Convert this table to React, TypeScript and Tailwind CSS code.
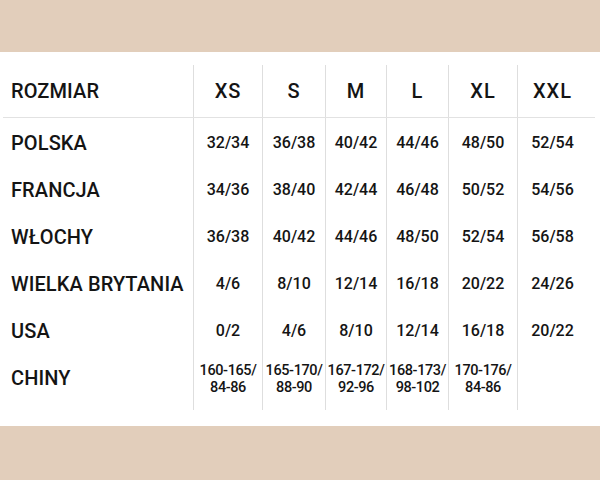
import React from "react";

const cols = ["XS", "S", "M", "L", "XL", "XXL"];
const rows: [string, string[]][] = [
  ["POLSKA", ["32/34", "36/38", "40/42", "44/46", "48/50", "52/54"]],
  ["FRANCJA", ["34/36", "38/40", "42/44", "46/48", "50/52", "54/56"]],
  ["WŁOCHY", ["36/38", "40/42", "44/46", "48/50", "52/54", "56/58"]],
  ["WIELKA BRYTANIA", ["4/6", "8/10", "12/14", "16/18", "20/22", "24/26"]],
  ["USA", ["0/2", "4/6", "8/10", "12/14", "16/18", "20/22"]],
];
const chiny: [string, string][] = [
  ["160-165/", "84-86"],
  ["165-170/", "88-90"],
  ["167-172/", "92-96"],
  ["168-173/", "98-102"],
  ["170-176/", "84-86"],
];

const grid = "grid grid-cols-[190px_69px_63px_61px_62px_69px_78px]";
const cell = "flex items-center justify-center border-l border-[#dedede]";

export default function App() {
  return (
    <div
      className="w-[600px] h-[480px] flex flex-col bg-white text-[#141414]"
      style={{ fontFamily: "Roboto, 'Liberation Sans', sans-serif" }}
    >
      <div className="h-[52px] bg-[#e2cebb]" />
      <div className="flex-1 pt-[13px] pl-[3px]">
        <div className={`${grid} h-[53px] border-b border-[#e2e2e2] w-[592px]`}>
          <div className="flex items-center pl-[8px] text-[20px] font-medium tracking-[0.1px]">ROZMIAR</div>
          {cols.map((c, i) => (
            <div key={c} className={`${cell} text-[20px] font-medium tracking-[1px] ${i === 5 ? "pr-[8px]" : ""}`}>
              {c}
            </div>
          ))}
        </div>
        {rows.map(([label, vals]) => (
          <div key={label} className={`${grid} h-[47px]`}>
            <div className="flex items-center pl-[8px] pt-[3px] text-[20px] font-medium tracking-[0.1px]">{label}</div>
            {vals.map((v, i) => (
              <div key={i} className={`${cell} pt-[3px] text-[16px] font-medium ${i === 5 ? "pr-[8px]" : ""}`}>
                {v}
              </div>
            ))}
          </div>
        ))}
        <div className={`${grid} h-[57px]`}>
          <div className="flex items-center pl-[8px] pt-[3px] pb-[10px] text-[20px] font-medium tracking-[0.1px]">CHINY</div>
          {chiny.map(([a, b], i) => (
            <div key={i} className={`${cell} flex-col pt-[5px] pb-[10px] text-[14.5px] font-medium leading-[17px] tracking-[-0.4px]`}>
              <span>{a}</span>
              <span>{b}</span>
            </div>
          ))}
          <div className="border-l border-[#dedede]" />
        </div>
      </div>
      <div className="h-[54px] bg-[#e2cebb]" />
    </div>
  );
}
